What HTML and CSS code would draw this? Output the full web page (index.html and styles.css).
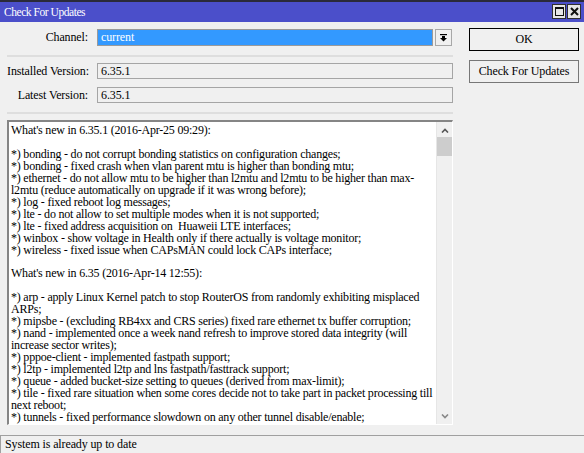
FILE: index.html
```html
<!DOCTYPE html>
<html>
<head>
<meta charset="utf-8">
<title>Check For Updates</title>
<link rel="stylesheet" href="styles.css">
</head>
<body>
<div class="window">
  <div class="titlebar">
    <span class="title">Check For Updates</span>
    <div class="title-btns">
      <span class="tbtn"><svg width="9" height="9" viewBox="0 0 9 9"><rect x="0.5" y="0.5" width="8" height="8" fill="none" stroke="#111" stroke-width="1"/><rect x="0" y="0" width="9" height="2" fill="#111"/></svg></span>
      <span class="tbtn"><svg width="9" height="9" viewBox="0 0 9 9"><path d="M1 1 L8 8 M8 1 L1 8" stroke="#111" stroke-width="2"/></svg></span>
    </div>
  </div>
  <div class="content">
    <div class="form">
      <div class="row row-channel">
        <span class="label">Channel:</span>
        <div class="select"><span>current</span></div>
        <span class="drop-btn"><svg width="7" height="8" viewBox="0 0 7 8"><rect x="0" y="0" width="7" height="1.2" fill="#000"/><rect x="2" y="2" width="3" height="2.5" fill="#000"/><polygon points="0,4 7,4 3.5,7.6" fill="#000"/></svg></span>
      </div>
      <div class="sep"></div>
      <div class="row">
        <span class="label">Installed Version:</span>
        <div class="field">6.35.1</div>
      </div>
      <div class="row row-latest">
        <span class="label">Latest Version:</span>
        <div class="field">6.35.1</div>
      </div>
      <div class="sep sep-low"></div>
      <div class="log">
        <div class="log-text">What's new in 6.35.1 (2016-Apr-25 09:29):

*) bonding - do not corrupt bonding statistics on configuration changes;
*) bonding - fixed crash when vlan parent mtu is higher than bonding mtu;
*) ethernet - do not allow mtu to be higher than l2mtu and l2mtu to be higher than max-
l2mtu (reduce automatically on upgrade if it was wrong before);
*) log - fixed reboot log messages;
*) lte - do not allow to set multiple modes when it is not supported;
*) lte - fixed address acquisition on  Huaweii LTE interfaces;
*) winbox - show voltage in Health only if there actually is voltage monitor;
*) wireless - fixed issue when CAPsMAN could lock CAPs interface;

What's new in 6.35 (2016-Apr-14 12:55):

*) arp - apply Linux Kernel patch to stop RouterOS from randomly exhibiting misplaced
ARPs;
*) mipsbe - (excluding RB4xx and CRS series) fixed rare ethernet tx buffer corruption;
*) nand - implemented once a week nand refresh to improve stored data integrity (will
increase sector writes);
*) pppoe-client - implemented fastpath support;
*) l2tp - implemented l2tp and lns fastpath/fasttrack support;
*) queue - added bucket-size setting to queues (derived from max-limit);
*) tile - fixed rare situation when some cores decide not to take part in packet processing till
next reboot;
*) tunnels - fixed performance slowdown on any other tunnel disable/enable;</div>
        <div class="scrollbar">
          <svg class="chev" width="8" height="5" viewBox="0 0 8 5"><path d="M1 4.5 L4 1.5 L7 4.5" fill="none" stroke="#555" stroke-width="1.6"/></svg>
          <div class="thumb"></div>
          <div class="track"></div>
          <svg class="chev" width="8" height="5" viewBox="0 0 8 5"><path d="M1 0.5 L4 3.5 L7 0.5" fill="none" stroke="#888" stroke-width="1.6"/></svg>
        </div>
      </div>
    </div>
    <div class="actions">
      <button class="btn btn-default">OK</button>
      <button class="btn">Check For Updates</button>
    </div>
  </div>
  <div class="status">System is already up to date</div>
</div>
</body>
</html>
```

FILE: styles.css
```css
html, body {
  margin: 0;
  padding: 0;
}
body {
  background: #f0f0f0;
  font-family: "Liberation Serif", "Times New Roman", serif;
  font-size: 12px;
  letter-spacing: -0.12px;
  color: #000;
}
.window {
  width: 584px;
  height: 453px;
  display: flex;
  flex-direction: column;
  overflow: hidden;
}
.titlebar {
  height: 20px;
  border-top: 2px solid #2a2a3a;
  background: #4b4fca;
  display: flex;
  align-items: center;
  justify-content: space-between;
  padding: 0 3px 0 4px;
}
.title {
  color: #fff;
  font-size: 11.5px;
  letter-spacing: -0.45px;
}
.title-btns {
  display: flex;
  gap: 1px;
  margin-top: -1px;
}
.tbtn {
  width: 12px;
  height: 13px;
  background: #e6e6e6;
  border: 1px solid #303030;
  display: flex;
  align-items: center;
  justify-content: center;
}
.content {
  display: flex;
  align-items: flex-start;
  flex: 1;
}
.form {
  margin-left: 7px;
  width: 446px;
  padding-top: 7px;
}
.row {
  display: flex;
  align-items: stretch;
  height: 16px;
}
.row-channel {
  height: 17px;
}
.row-latest {
  margin-top: 8px;
}
.label {
  width: 81px;
  margin-right: 9px;
  text-align: right;
  line-height: 16px;
  white-space: nowrap;
}
.select {
  width: 336px;
  border: 1px solid #9a9a9a;
  background: #3399ff;
  color: #fff;
  box-sizing: border-box;
  line-height: 15px;
  padding-left: 3px;
}
.drop-btn {
  width: 17px;
  margin-left: 2px;
  border: 1px solid #a8a8a8;
  box-sizing: border-box;
  display: flex;
  align-items: center;
  justify-content: center;
}
.field {
  flex: 1;
  border: 1px solid #a5a5a5;
  box-sizing: border-box;
  line-height: 14px;
  padding-left: 3px;
}
.sep {
  height: 2px;
  background: #dedede;
  margin: 9px 0 6px;
}
.sep-low {
  margin: 9px 0 6px;
}
.log {
  height: 305px;
  box-sizing: border-box;
  border-style: solid;
  border-width: 2px 1px 1px 2px;
  border-color: #858585 #ffffff #ffffff #858585;
  background: #fff;
  display: flex;
}
.log-text {
  flex: 1;
  white-space: pre;
  overflow: hidden;
  line-height: 11.95px;
  letter-spacing: -0.21px;
  padding: 3px 0 0 2px;
}
.scrollbar {
  width: 16px;
  background: #f0f0f0;
  border-left: 1px solid #e6e6e6;
  display: flex;
  flex-direction: column;
  align-items: center;
  padding-top: 6px;
  padding-bottom: 5px;
  box-sizing: border-box;
}
.chev {
  display: block;
}
.thumb {
  width: 15px;
  height: 19px;
  background: #cdcdcd;
  margin-top: 4px;
}
.track {
  flex: 1;
}
.actions {
  margin-left: 16px;
  padding-top: 6px;
  display: flex;
  flex-direction: column;
  gap: 9px;
}
.btn {
  width: 110px;
  height: 23px;
  font-family: inherit;
  font-size: 12px;
  letter-spacing: -0.12px;
  background: #f0f0f0;
  border: 1px solid #777;
  color: #000;
  padding: 0;
}
.btn-default {
  border-color: #000;
}
.status {
  height: 18px;
  box-sizing: border-box;
  border-top: 1px solid #a0a0a0;
  border-left: 1px solid #a0a0a0;
  padding-left: 4px;
  line-height: 16px;
}
```
